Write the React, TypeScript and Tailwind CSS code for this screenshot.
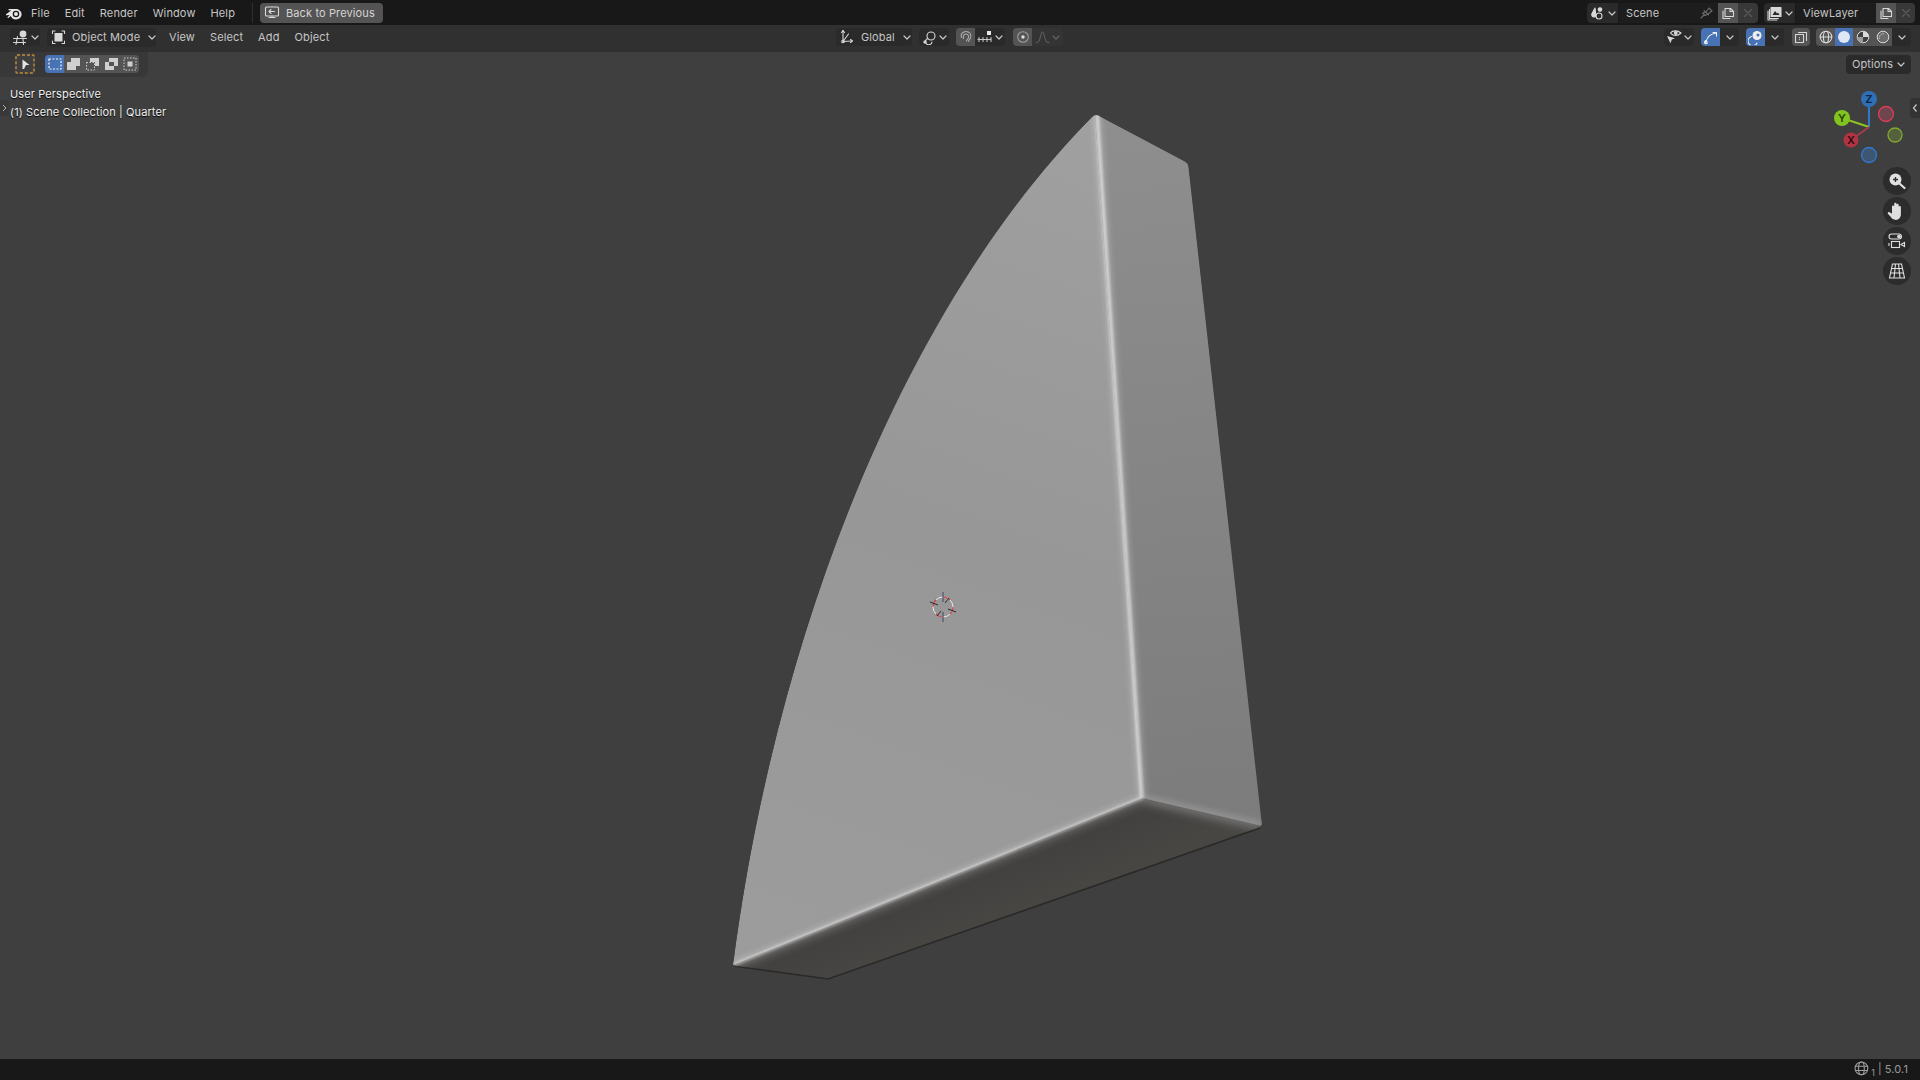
import type { ReactNode } from "react";

function Chevron({ dim }: { dim?: boolean }) {
  return (
    <svg width="8" height="5" viewBox="0 0 8 5" className={dim ? "opacity-30" : ""}>
      <path d="M1 1l3 3 3-3" fill="none" stroke="#c8c8c8" strokeWidth="1.2" strokeLinecap="round" strokeLinejoin="round" />
    </svg>
  );
}

function Ico({ children, w = 16, h = 16 }: { children: ReactNode; w?: number; h?: number }) {
  return (
    <svg width={w} height={h} viewBox={`0 0 ${w} ${h}`} fill="none" stroke="#d8d8d8" strokeWidth="1.1" strokeLinecap="round" strokeLinejoin="round">
      {children}
    </svg>
  );
}

function BlenderLogo() {
  return (
    <svg width="18" height="14" viewBox="0 0 18 14">
      <path d="M1 8.2L6.2 4.4 4 4.3a.6.6 0 010-1.2l6-.1c3.2-.3 6.6 1.800 6.600 5.300 0 3-2.600 5.200-5.600 5.200-2.800 0-4.800-1.500-5.100-3.400L3.600 11.800c-.6.500-1.400-.1-.9-.8l2-1.900-2.900.1c-.6 0-1.100-.6-.8-1z" fill="#e6e6e6" />
      <circle cx="11" cy="8" r="3.300" fill="#181818" />
      <circle cx="11" cy="8.100" r="2" fill="#e6e6e6" />
    </svg>
  );
}

function Btn({ w, className = "", children }: { w: number; className?: string; children: ReactNode }) {
  return (
    <div style={{ width: w }} className={`h-full flex items-center justify-center gap-[3px] shrink-0 ${className}`}>
      {children}
    </div>
  );
}

function TopBar() {
  return (
    <div className="h-[25px] pt-[1px] bg-[#181818] flex items-center text-[#c6c6c6] shrink-0">
      <div className="w-[31px] pl-[5px] flex items-center">
        <BlenderLogo />
      </div>
      <div className="flex gap-[15px] w-[221px]">
        <span>File</span>
        <span>Edit</span>
        <span>Render</span>
        <span>Window</span>
        <span>Help</span>
      </div>
      <div className="w-px h-[20px] bg-[#2e2e2e]" />
      <div className="ml-[7px] w-[123px] h-[20px] bg-[#545454] rounded-[4px] flex items-center pl-[4px] gap-[6px] text-[#d4d4d4]">
        <Ico w={16} h={16}>
          <rect x="1.500" y="2" width="13" height="9" rx="1" />
          <path d="M5 12.500h6M8 11v1.500M10.500 6.500H5M7 4.500l-2 2 2 2" />
        </Ico>
        <span>Back to Previous</span>
      </div>

      <div className="ml-auto flex items-center pr-[5px]">
        <div className="h-[20px] w-[171px] flex rounded-[4px] overflow-hidden">
          <Btn w={31} className="bg-[#2a2a2a]">
            <Ico w={15} h={15}>
              <path d="M5 2L2 7.500c-.8 2 .3 3.500 2.200 3.500.8 0 1.300-.3 1.800-.8z" fill="#d8d8d8" />
              <circle cx="10" cy="3.500" r="1.800" fill="#d8d8d8" />
              <circle cx="9" cy="10" r="3" />
            </Ico>
            <Chevron />
          </Btn>
          <div className="w-[100px] bg-[#1d1d1d] ml-px flex items-center pl-[7px] pr-[5px] justify-between">
            <span>Scene</span>
            <Ico w={14} h={14}>
              <path d="M2 12l3.500-3.500M5 4.500L9.500 9M6 9.500l-2.500-2.500L7 6l3-4 3 3-4 3z" stroke="#6a6a6a" />
            </Ico>
          </div>
          <Btn w={20} className="bg-[#545454]">
            <Ico w={14} h={14}>
              <path d="M4 2.500h5.500l3 3v5h-8.500zM9 2.500v3h3.500M2 5v7.500h7" />
            </Ico>
          </Btn>
          <Btn w={20} className="bg-[#383838]">
            <Ico w={12} h={12}>
              <path d="M2.500 2.500l7 7M9.500 2.500l-7 7" stroke="#5c5c5c" />
            </Ico>
          </Btn>
        </div>
        <div className="ml-[6px] h-[20px] w-[151px] flex rounded-[4px] overflow-hidden">
          <Btn w={31} className="bg-[#2a2a2a]">
            <Ico w={15} h={15}>
              <rect x="4" y="1.500" width="10" height="9" fill="#d8d8d8" />
              <path d="M2.500 3.500v9h9M1 5v9h9" />
              <path d="M5.500 9l2.500-4 2 2.500 1-1 1.500 2.500z" fill="#2a2a2a" stroke="none" />
            </Ico>
            <Chevron />
          </Btn>
          <div className="w-[80px] bg-[#1d1d1d] ml-px flex items-center pl-[7px]">ViewLayer</div>
          <Btn w={20} className="bg-[#545454]">
            <Ico w={14} h={14}>
              <path d="M4 2.500h5.500l3 3v5h-8.500zM9 2.500v3h3.500M2 5v7.500h7" />
            </Ico>
          </Btn>
          <Btn w={19} className="bg-[#383838]">
            <Ico w={12} h={12}>
              <path d="M2.500 2.500l7 7M9.500 2.500l-7 7" stroke="#5c5c5c" />
            </Ico>
          </Btn>
        </div>
      </div>
    </div>
  );
}

function HeaderBar() {
  return (
    <div className="h-[27px] pt-[3px] bg-[#303030] flex items-start text-[#c6c6c6] shrink-0">
      {/* left side */}
      <div className="w-[836px] h-[18px] shrink-0 flex items-center pl-[10px]">
        <div className="w-[30px] h-[18px] bg-[#2a2a2a] rounded-[4px] flex items-center justify-center gap-[2px]">
          <Ico w={17} h={17}>
            <path d="M1.500 9.500h13M1.500 13.500h12M5.500 7.500l-1.500 8M11 9.500l.5 6" />
            <circle cx="11" cy="5" r="3.400" fill="#d8d8d8" stroke="none" />
          </Ico>
          <Chevron />
        </div>
        <div className="ml-[7px] w-[109px] h-[19px] bg-[#2a2a2a] rounded-[4px] flex items-center pl-[3px] gap-[5px]">
          <Ico w={17} h={17}>
            <path d="M5 2H2.500v2.500M12 2h2.500v2.500M2.500 12v2.500H5M14.500 12v2.500H12" />
            <rect x="4.500" y="4" width="8" height="8.500" fill="#d8d8d8" stroke="none" />
          </Ico>
          <span className="whitespace-nowrap w-[68px]">Object Mode</span>
          <span className="ml-[3px]">
            <Chevron />
          </span>
        </div>
        <div className="ml-[13px] flex gap-[15px]">
          <span>View</span>
          <span>Select</span>
          <span>Add</span>
          <span>Object</span>
        </div>
      </div>

      {/* transform + snapping */}
      <div className="flex items-center h-[18px]">
        <div className="w-[76px] h-[18px] bg-[#2a2a2a] rounded-[4px] flex items-center pl-[3px] gap-[7px]">
          <Ico w={15} h={16}>
            <path d="M4 1.500v11l9-.5M4 12.500L9.500 5" />
            <circle cx="4" cy="12.500" r="1.300" />
            <path d="M2.500 3.500L4 1.500l1.500 2M11.500 10.500l2 1.500-2 1.500" />
          </Ico>
          <span className="w-[35px]">Global</span>
          <Chevron />
        </div>
        <div className="ml-[7px] w-[30px] h-[18px] bg-[#2a2a2a] rounded-[4px] flex items-center justify-center gap-[2px]">
          <Ico w={15} h={15}>
            <circle cx="9" cy="6" r="4" />
            <path d="M6 8.500a3.200 3.200 0 104 3.500" />
            <circle cx="3" cy="12" r="1.100" fill="#d8d8d8" />
          </Ico>
          <Chevron />
        </div>
        <div className="ml-[7px] w-[49px] h-[18px] flex rounded-[4px] overflow-hidden">
          <div className="w-[19px] bg-[#545454] flex items-center justify-center">
            <Ico w={14} h={14}>
              <path d="M2.500 7.500C1 4 4 1.500 7 1.500s6 2.500 4.500 6.500l-2.200 3.500M4.500 8.500C3.500 5.800 5.200 4 7 4s3.500 2 2.200 4.200l-1.700 2.600" stroke="#b0b0b0" />
            </Ico>
          </div>
          <div className="flex-1 bg-[#2a2a2a] flex items-center justify-center gap-[2px]">
            <Ico w={16} h={14}>
              <path d="M1 9.500h13M2 7.500v4M6 7.500v4M10 7.500v4M14 7.500v4" stroke="#c8c8c8" />
              <rect x="10" y="1" width="4" height="4" fill="#e6e6e6" stroke="none" />
            </Ico>
            <Chevron />
          </div>
        </div>
        <div className="ml-[8px] w-[50px] h-[18px] flex rounded-[4px] overflow-hidden">
          <div className="w-[19px] bg-[#545454] flex items-center justify-center">
            <Ico w={14} h={14}>
              <circle cx="7" cy="7" r="5.300" stroke="#9a9a9a" />
              <circle cx="7" cy="7" r="1.700" fill="#e0e0e0" stroke="none" />
            </Ico>
          </div>
          <div className="flex-1 bg-[#343434] flex items-center justify-center gap-[2px]">
            <Ico w={15} h={14}>
              <path d="M1 12.500c3 0 3.500-2 4.500-6 .7-3 1.300-4.500 2-4.500s1.300 1.500 2 4.500c1 4 1.500 6 4.500 6" stroke="#5f5f5f" />
            </Ico>
            <Chevron dim />
          </div>
        </div>
      </div>

      {/* right side */}
      <div className="ml-auto h-[18px] flex items-center pr-[9px]">
        <div className="w-[30px] h-[18px] bg-[#2a2a2a] rounded-[4px] flex items-center justify-center gap-[2px]">
          <Ico w={16} h={16}>
            <path d="M4.500 4C6.500 1.300 11.500 1 15 4 11.500 7.500 6.500 7 4.500 4z" />
            <circle cx="9.800" cy="4" r="1.900" fill="#d8d8d8" stroke="none" />
            <path d="M1 7l8 2.300-3.200 1.300-1.300 3.600z" fill="#d8d8d8" stroke="none" />
          </Ico>
          <Chevron />
        </div>
        <div className="ml-[7px] w-[38px] h-[18px] flex rounded-[4px] overflow-hidden">
          <div className="w-[19px] bg-[#4772b3] flex items-center justify-center">
            <Ico w={15} h={15}>
              <path d="M3 12C4 7 7 4 13 3M10 2.500h3.500V6M2.500 10.500l-1 2 2 1" stroke="#f0f0f0" />
              <circle cx="3" cy="12.500" r="1.300" stroke="#f0f0f0" />
            </Ico>
          </div>
          <div className="flex-1 bg-[#2a2a2a] flex items-center justify-center">
            <Chevron />
          </div>
        </div>
        <div className="ml-[7px] w-[38px] h-[18px] flex rounded-[4px] overflow-hidden">
          <div className="w-[19px] bg-[#4772b3] flex items-center justify-center">
            <Ico w={15} h={15}>
              <circle cx="9" cy="5.500" r="4.500" fill="#f0f0f0" stroke="none" />
              <path d="M3.500 6.500a4.700 4.700 0 105.500 6.500" stroke="#f0f0f0" />
              <circle cx="10" cy="5" r="1.500" fill="#4772b3" stroke="none" />
            </Ico>
          </div>
          <div className="flex-1 bg-[#2a2a2a] flex items-center justify-center">
            <Chevron />
          </div>
        </div>
        <div className="ml-[8px] w-[18px] h-[18px] bg-[#545454] rounded-[4px] flex items-center justify-center">
          <Ico w={14} h={14}>
            <path d="M4.500 2.500h8v8" />
            <rect x="1.500" y="4.500" width="8" height="8" />
            <path d="M5.500 7.500v.1M5.500 9.500v.1" />
          </Ico>
        </div>
        <div className="ml-[6px] w-[95px] h-[18px] flex rounded-[4px] overflow-hidden">
          <div className="w-[19px] bg-[#545454] flex items-center justify-center">
            <Ico w={14} h={14}>
              <circle cx="7" cy="7" r="5.800" />
              <ellipse cx="7" cy="7" rx="2.600" ry="5.800" />
              <path d="M1.200 7h11.600" />
            </Ico>
          </div>
          <div className="w-[18px] bg-[#4772b3] flex items-center justify-center">
            <svg width="14" height="14"><circle cx="7" cy="7" r="6" fill="#dfe7f4" /></svg>
          </div>
          <div className="w-[20px] bg-[#545454] flex items-center justify-center">
            <svg width="14" height="14" viewBox="0 0 14 14">
              <circle cx="7" cy="7" r="5.800" fill="#3f3f3f" stroke="#d8d8d8" />
              <path d="M7 1.200A5.800 5.800 0 0112.800 7H7z" fill="#d8d8d8" />
              <path d="M1.200 7H7v5.800A5.800 5.800 0 011.200 7z" fill="#9a9a9a" />
            </svg>
          </div>
          <div className="w-[19px] bg-[#545454] flex items-center justify-center">
            <svg width="14" height="14" viewBox="0 0 14 14">
              <circle cx="7" cy="7" r="5.800" fill="#6c6c6c" stroke="#d8d8d8" />
              <path d="M3.500 9a4 4 0 015-5" fill="none" stroke="#d8d8d8" strokeDasharray="1.200 1" />
            </svg>
          </div>
          <div className="flex-1 bg-[#2a2a2a] flex items-center justify-center">
            <Chevron />
          </div>
        </div>
      </div>
    </div>
  );
}

function ToolRow() {
  return (
    <div className="flex items-start justify-between h-[25px]">
      <div className="w-[148px] h-[25px] pb-[2px] bg-[#383838] rounded-br-[6px] flex items-center pl-[15px]">
        <div className="w-[20px] h-[20px] bg-[#3f3f3f] rounded-[2px] flex items-center justify-center">
          <svg width="20" height="20" viewBox="0 0 20 20">
            <rect x="1" y="1" width="18" height="18" rx="1" fill="none" stroke="#c28d3c" strokeWidth="1.400" strokeDasharray="3 2" />
            <path d="M7.500 5.500l7 5.500h-3.500l-2 4h-1.500z" fill="#e4e4e4" />
          </svg>
        </div>
        <div className="ml-[10px] h-[18px] flex rounded-[4px] overflow-hidden bg-[#545454]">
          <div className="w-[19px] bg-[#4772b3] flex items-center justify-center">
            <svg width="14" height="14" viewBox="0 0 14 14">
              <rect x="1" y="2" width="12" height="10" fill="none" stroke="#f4f4f4" strokeWidth="1.200" strokeDasharray="2 1.500" />
            </svg>
          </div>
          <div className="w-[19px] flex items-center justify-center">
            <svg width="14" height="14" viewBox="0 0 14 14">
              <path d="M4 1h9v8H9v4H0V5h4z" fill="#cfcfcf" />
            </svg>
          </div>
          <div className="w-[19px] flex items-center justify-center">
            <svg width="14" height="14" viewBox="0 0 14 14">
              <path d="M4 1h9v8H9V5H4z" fill="#cfcfcf" />
              <rect x="0.500" y="5.500" width="8" height="7.500" fill="none" stroke="#cfcfcf" strokeDasharray="1.500 1.500" />
            </svg>
          </div>
          <div className="w-[19px] flex items-center justify-center">
            <svg width="14" height="14" viewBox="0 0 14 14">
              <path d="M4 1h9v8H9v4H0V5h4z M4 5v4h5V5z" fill="#cfcfcf" fillRule="evenodd" />
            </svg>
          </div>
          <div className="w-[18px] flex items-center justify-center">
            <svg width="14" height="14" viewBox="0 0 14 14">
              <rect x="1" y="1" width="12" height="12" fill="none" stroke="#cfcfcf" strokeDasharray="1.500 1.500" />
              <rect x="4.500" y="4.500" width="5" height="5" fill="#cfcfcf" />
            </svg>
          </div>
        </div>
      </div>
      <div className="mt-[3px] mr-[9px] w-[65px] h-[19px] bg-[#2a2a2a] rounded-[4px] flex items-center justify-center gap-[4px] text-[#c6c6c6]">
        <span>Options</span>
        <Chevron />
      </div>
    </div>
  );
}

function Gizmo() {
  return (
    <svg width="75" height="85" viewBox="0 0 75 85" className="absolute left-[1832px] top-[37px]">
      <g transform="translate(-1832,-89)">
        <circle cx="1886" cy="114" r="7.500" fill="#6e4650" stroke="#dc3c55" strokeWidth="1.300" />
        <circle cx="1895" cy="135" r="7" fill="#55603e" stroke="#84a82c" strokeWidth="1.300" />
        <circle cx="1869" cy="155" r="7.500" fill="#3f5672" stroke="#2f78cc" strokeWidth="1.300" />
        <path d="M1869 127V99" stroke="#2f78cc" strokeWidth="2" />
        <path d="M1869 127l-27-9" stroke="#8cc423" strokeWidth="2" />
        <path d="M1869 127l-18 13" stroke="#a83a48" strokeWidth="2" />
        <circle cx="1869" cy="99" r="8" fill="#2f6fb8" />
        <circle cx="1842" cy="118" r="8" fill="#82c41e" />
        <circle cx="1851" cy="140" r="7.500" fill="#b03444" />
        <text x="1869" y="103" textAnchor="middle" fontSize="11" fontWeight="600" fill="#10243c">Z</text>
        <text x="1842" y="122" textAnchor="middle" fontSize="11" fontWeight="600" fill="#2a3d0c">Y</text>
        <text x="1851" y="144" textAnchor="middle" fontSize="11" fontWeight="600" fill="#2e0c12">X</text>
      </g>
    </svg>
  );
}

function NavButtons() {
  return (
    <div className="absolute right-[9px] top-[115px] flex flex-col gap-[2px]">
      <div className="w-[28px] h-[28px] rounded-full bg-[#2c2c2c] flex items-center justify-center">
        <svg width="18" height="18" viewBox="0 0 18 18">
          <circle cx="7.500" cy="7.500" r="6" fill="#e0e0e0" />
          <path d="M5 7.500h5M7.500 5v5" stroke="#2c2c2c" strokeWidth="1.300" />
          <path d="M12 12l4.500 4" stroke="#e0e0e0" strokeWidth="2.200" strokeLinecap="round" />
        </svg>
      </div>
      <div className="w-[28px] h-[28px] rounded-full bg-[#2c2c2c] flex items-center justify-center">
        <svg width="20" height="20" viewBox="0 0 18 18">
          <path d="M2 10l2.500 1.500V5a1 1 0 012 0v3-5.500a1 1 0 012 0V8 3.500a1 1 0 012 0V8 5.500a1 1 0 012 0v6.500c0 3-2 5-4.500 5-2.300 0-3.500-1-4.500-2.500L.8 11.500C.4 10.500 1.200 9.600 2 10z" fill="#e0e0e0" />
        </svg>
      </div>
      <div className="w-[28px] h-[28px] rounded-full bg-[#2c2c2c] flex items-center justify-center">
        <svg width="18" height="18" viewBox="0 0 18 18" fill="none" stroke="#e0e0e0" strokeWidth="1.100">
          <path d="M3.500 2h8a2.500 2.500 0 012 2.500c0 1.500-1 2.500-2.500 2.500H3.500C2 7 1 6 1 4.500S2 2 3.500 2z" />
          <circle cx="11" cy="4.500" r="1.300" fill="#e0e0e0" />
          <rect x="3.500" y="9.500" width="8" height="6" />
          <path d="M1 11v3M13 12.500l3.500-2v4z" />
        </svg>
      </div>
      <div className="w-[28px] h-[28px] rounded-full bg-[#2c2c2c] flex items-center justify-center">
        <svg width="18" height="18" viewBox="0 0 18 18" fill="none" stroke="#e0e0e0" strokeWidth="1.100">
          <path d="M4.500 2h9l3 14h-15zM3.500 6.500h11M2.500 11h13M7.500 2l-1.500 14M10.500 2L12 16" />
        </svg>
      </div>
    </div>
  );
}

// the solid, drawn in page coordinates
function Solid() {
  return (
    <svg className="absolute inset-0 w-full h-full" viewBox="0 52 1920 1007" preserveAspectRatio="none">
      <defs>
        <linearGradient id="faceL" gradientUnits="userSpaceOnUse" x1="1095" y1="114" x2="800" y2="950">
          <stop offset="0" stopColor="#a0a0a0" />
          <stop offset="0.5" stopColor="#979797" />
          <stop offset="1" stopColor="#9c9c9c" />
        </linearGradient>
        <linearGradient id="faceR" gradientUnits="userSpaceOnUse" x1="1140" y1="130" x2="1200" y2="830">
          <stop offset="0" stopColor="#8e8e8e" />
          <stop offset="0.5" stopColor="#858585" />
          <stop offset="1" stopColor="#7c7c7c" />
        </linearGradient>
        <linearGradient id="faceB" gradientUnits="userSpaceOnUse" x1="1000" y1="800" x2="1040" y2="900">
          <stop offset="0" stopColor="#393734" />
          <stop offset="0.6" stopColor="#434140" />
          <stop offset="1" stopColor="#484643" />
        </linearGradient>
        <filter id="soft" x="-20%" y="-20%" width="140%" height="140%">
          <feGaussianBlur stdDeviation="1.500" />
        </filter>
        <filter id="wide" x="-20%" y="-20%" width="140%" height="140%">
          <feGaussianBlur stdDeviation="3.500" />
        </filter>
        <filter id="band" x="-20%" y="-20%" width="140%" height="140%">
          <feGaussianBlur stdDeviation="5" />
        </filter>
        <clipPath id="outline">
          <path d="M733 965C775 640 900 310 1091 118Q1095 113 1100 116L1184 161Q1188 163 1189 168L1262 820Q1263 826 1258 828L828 978L736 966Q732 966 733 960Z" />
        </clipPath>
      </defs>
      {/* dark rim under the base */}
      <path d="M734 966L828 979L1260 828" fill="none" stroke="#2b2a28" strokeWidth="1.600" />
      <g clipPath="url(#outline)">
        <path d="M733 965L1142 798L1262 826L828 978Z" fill="url(#faceB)" />
        <path d="M1095 114L1188 163L1262 826L1142 798Z" fill="url(#faceR)" />
        <path d="M733 965C775 640 900 310 1095 114L1142 798Z" fill="url(#faceL)" />
        {/* soft bevel falloff into the underside */}
        <path d="M733 968L1142 801L1262 829" stroke="#8a8a8a" strokeWidth="4" fill="none" filter="url(#band)" opacity="0.7" />
        {/* bevel highlights */}
        <path d="M1097 114L1142 798" stroke="#ffffff" strokeWidth="5" fill="none" filter="url(#wide)" opacity="0.4" />
        <path d="M1097 114L1142 798" stroke="#ffffff" strokeWidth="2.500" fill="none" filter="url(#soft)" opacity="0.75" />
        <path d="M733 964L1142 797" stroke="#ffffff" strokeWidth="4" fill="none" filter="url(#wide)" opacity="0.35" />
        <path d="M733 965L1142 798" stroke="#ffffff" strokeWidth="2" fill="none" filter="url(#soft)" opacity="0.65" />
        <path d="M1142 798L1262 825" stroke="#e0e0e0" strokeWidth="3" fill="none" filter="url(#wide)" opacity="0.5" />
      </g>
    </svg>
  );
}

function Cursor3D() {
  return (
    <svg width="32" height="32" viewBox="0 0 32 32" className="absolute left-[927px] top-[539px]">
      <circle cx="16" cy="16" r="10" fill="none" stroke="#e8e8e8" strokeWidth="1" />
      <circle cx="16" cy="16" r="10" fill="none" stroke="#c9404a" strokeWidth="1.100" strokeDasharray="7.850 7.850" />
      <path d="M16 1v10M16 21v10" stroke="#3c4a60" strokeWidth="1" />
      <path d="M3 11l8 3M21 18l8 3M10 25l4-5M18 12l4-5" stroke="#2a2a2a" strokeWidth="1" />
    </svg>
  );
}

export default function App() {
  return (
    <div className="w-[1920px] h-[1080px] flex flex-col overflow-hidden bg-[#3f3f3f] text-[11px] tracking-[0.12px] leading-none [font-family:Inter,'Liberation_Sans',sans-serif]">
      <TopBar />
      <HeaderBar />
      <div className="relative flex-1 bg-[#3f3f3f]">
        <Solid />
        <Cursor3D />
        <div className="relative">
          <ToolRow />
          <div className="pl-[10px] pt-[8px] text-[#f2f2f2] [text-shadow:0_1px_1px_#000]">
            <div className="h-[18px] flex items-center">User Perspective</div>
            <div className="h-[18px] flex items-center">(1) Scene Collection | Quarter</div>
          </div>
        </div>
        <div className="absolute left-0 top-[48px] w-[9px] h-[16px] bg-[#383838] rounded-r-[3px] flex items-center justify-center">
          <svg width="5" height="8" viewBox="0 0 5 8">
            <path d="M1 1l3 3-3 3" fill="none" stroke="#b0b0b0" strokeWidth="1" />
          </svg>
        </div>
        <Gizmo />
        <div className="absolute right-0 top-[46px] w-[10px] h-[20px] bg-[#333333] rounded-l-[4px] flex items-center justify-center">
          <svg width="6" height="10" viewBox="0 0 6 10">
            <path d="M4.500 1.500L1.500 5l3 3.500" fill="none" stroke="#c8c8c8" strokeWidth="1.200" />
          </svg>
        </div>
        <NavButtons />
      </div>
      <div className="h-[21px] bg-[#181818] flex items-center justify-end pr-[12px] text-[#9a9a9a] shrink-0">
        <svg width="17" height="17" viewBox="0 0 16 16" fill="none" stroke="#a0a0a0" strokeWidth="1">
          <circle cx="7" cy="7" r="6" />
          <ellipse cx="7" cy="7" rx="2.700" ry="6" />
          <path d="M1.500 5h11M1.500 9h11" />
        </svg>
        <span className="text-[9px] self-end mb-[3px]">1</span>
        <span className="ml-[3px]">|</span>
        <span className="ml-[3px]">5.0.1</span>
      </div>
    </div>
  );
}
